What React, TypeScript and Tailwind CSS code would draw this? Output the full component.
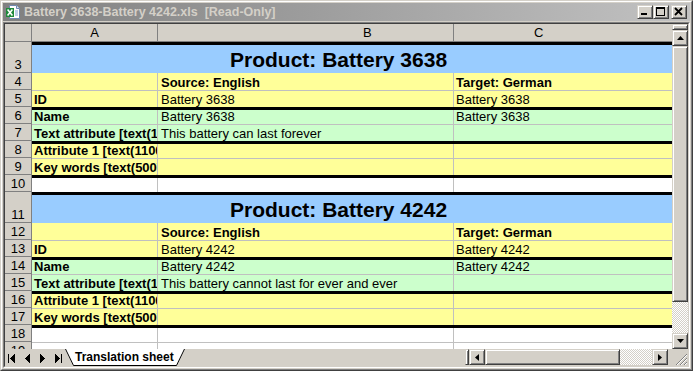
import React from "react";

type Row = {
  n: number;
  kind: "title" | "data" | "blank";
  top: string;
  bg: string;
  a?: string;
  b?: string;
  c?: string;
  head?: boolean;
};

const THICK = "border-t-[3px] border-t-black";
const GRID = "border-t border-t-[#c0c0c0]";
const YELLOW = "bg-[#ffff99]";
const GREEN = "bg-[#ccffcc]";
const BLUE = "bg-[#99ccff]";

const RAISED =
  "border border-t-[#d4d0c8] border-l-[#d4d0c8] border-r-[#404040] border-b-[#404040] bg-[#d4d0c8] shadow-[inset_1px_1px_#ffffff,inset_-1px_-1px_#808080]";
const DITHER =
  "[background-image:repeating-conic-gradient(#d4d0c8_0_25%,#ffffff_0_50%)] [background-size:2px_2px]";

function block(start: number, id: string, desc: string): Row[] {
  return [
    { n: start, kind: "title", top: THICK, bg: BLUE, a: `Product: Battery ${id}` },
    {
      n: start + 1,
      kind: "data",
      top: "",
      bg: YELLOW,
      a: "",
      b: "Source: English",
      c: "Target: German",
      head: true,
    },
    { n: start + 2, kind: "data", top: GRID, bg: YELLOW, a: "ID", b: `Battery ${id}`, c: `Battery ${id}` },
    { n: start + 3, kind: "data", top: THICK, bg: GREEN, a: "Name", b: `Battery ${id}`, c: `Battery ${id}` },
    { n: start + 4, kind: "data", top: GRID, bg: GREEN, a: "Text attribute [text(1000)]", b: desc, c: "" },
    { n: start + 5, kind: "data", top: THICK, bg: YELLOW, a: "Attribute 1 [text(1100)]", b: "", c: "" },
    { n: start + 6, kind: "data", top: GRID, bg: YELLOW, a: "Key words [text(500)]", b: "", c: "" },
    { n: start + 7, kind: "blank", top: THICK, bg: "bg-white" },
  ];
}

const rows: Row[] = [
  ...block(3, "3638", "This battery can last forever"),
  ...block(11, "4242", "This battery cannot last for ever and ever"),
  { n: 19, kind: "blank", top: GRID, bg: "bg-white" },
];

function ExcelIcon() {
  return (
    <svg width="16" height="16" viewBox="0 0 16 16">
      <path d="M4.5 1.5H11.5L14.5 4.5V14.5H4.5Z" fill="#ffffff" stroke="#7088b0" />
      <path d="M11.5 1.5V4.5H14.5" fill="#dde6f3" stroke="#7088b0" />
      <path d="M10 7H13M10 9H13M10 11H13" stroke="#7fa0d0" />
      <rect x="1" y="4" width="8" height="9" fill="#1f8a3b" />
      <path d="M2.6 5.6L7.4 11.4M7.4 5.6L2.6 11.4" stroke="#ffffff" strokeWidth="1.6" />
    </svg>
  );
}

function CaptionButton({ kind }: { kind: "min" | "max" | "close" }) {
  return (
    <div className={`flex h-[14px] w-[16px] items-center justify-center ${RAISED}`}>
      <svg width="14" height="12" viewBox="0 0 14 12" shapeRendering="crispEdges">
        {kind === "min" ? <rect x="3" y="7" width="6" height="2" fill="#000" /> : null}
        {kind === "max" ? (
          <g fill="#000">
            <rect x="2" y="1" width="9" height="2" />
            <rect x="2" y="1" width="1" height="9" />
            <rect x="10" y="1" width="1" height="9" />
            <rect x="2" y="9" width="9" height="1" />
          </g>
        ) : null}
        {kind === "close" ? (
          <path
            d="M3 2L10 9M10 2L3 9"
            stroke="#000"
            strokeWidth="1.8"
            shapeRendering="auto"
          />
        ) : null}
      </svg>
    </div>
  );
}

function Arrow({ dir }: { dir: "up" | "down" | "left" | "right" }) {
  const points = {
    up: "0,4 7,4 3.5,0",
    down: "0,0 7,0 3.5,4",
    left: "4,0 4,7 0,3.5",
    right: "0,0 0,7 4,3.5",
  }[dir];
  const vertical = dir === "up" || dir === "down";
  return (
    <svg width={vertical ? 7 : 4} height={vertical ? 4 : 7} viewBox={vertical ? "0 0 7 4" : "0 0 4 7"}>
      <polygon points={points} fill="#000" />
    </svg>
  );
}

function SheetRow({ row }: { row: Row }) {
  const height = row.kind === "title" ? "h-[31px]" : "h-[17px]";
  return (
    <div className={`flex shrink-0 ${height}`}>
      <div className="flex w-[27px] shrink-0 items-end justify-center border-r border-b border-[#808080] bg-[#d4d0c8] text-[13px] leading-[15px] text-black">
        {row.n}
      </div>
      {row.kind === "title" ? (
        <div
          className={`flex flex-1 items-end pb-px pl-[198px] text-[21px] leading-[24px] font-bold whitespace-nowrap text-black ${row.top} ${row.bg}`}
        >
          {row.a}
        </div>
      ) : (
        <div className={`flex flex-1 text-[13px] leading-[15px] text-black ${row.top} ${row.bg}`}>
          <div className="flex w-[125px] shrink-0 items-end overflow-hidden pl-[2px] font-bold whitespace-nowrap">
            {row.a}
          </div>
          <div
            className={`flex w-[296px] shrink-0 items-end overflow-hidden border-l border-[#c0c0c0] pl-[3px] whitespace-nowrap ${
              row.head ? "font-bold" : ""
            }`}
          >
            {row.b}
          </div>
          <div
            className={`flex flex-1 items-end overflow-hidden border-l border-[#c0c0c0] pl-[2px] whitespace-nowrap ${
              row.head ? "font-bold" : ""
            }`}
          >
            {row.c}
          </div>
        </div>
      )}
    </div>
  );
}

export default function App() {
  return (
    <div className="h-[371px] w-[693px] overflow-hidden border border-t-[#d4d0c8] border-r-[#404040] border-b-[#404040] border-l-[#d4d0c8] bg-[#d4d0c8] font-['Liberation_Sans',Arial,sans-serif]">
      <div className="flex h-full flex-col border border-t-white border-r-[#808080] border-b-[#808080] border-l-white p-px">
        {/* title bar */}
        <div className="flex h-[18px] shrink-0 items-center bg-linear-to-r from-[#808080] to-[#c2c2c2] pr-[3px] pl-[2px]">
          <ExcelIcon />
          <span className="ml-[3px] text-[12.5px] leading-[18px] font-bold whitespace-pre text-[#d4d0c8]">
            {"Battery 3638-Battery 4242.xls  [Read-Only]"}
          </span>
          <div className="ml-auto flex items-center">
            <CaptionButton kind="min" />
            <CaptionButton kind="max" />
            <div className="ml-[2px]">
              <CaptionButton kind="close" />
            </div>
          </div>
        </div>

        {/* sheet window */}
        <div className="mt-px flex flex-1 flex-col border border-t-[#808080] border-r-white border-b-white border-l-[#808080]">
          <div className="flex flex-1 flex-col border border-t-[#404040] border-r-[#d4d0c8] border-b-[#d4d0c8] border-l-[#404040]">
            <div className="flex h-[325px] shrink-0">
              <div className="flex w-[667px] shrink-0 flex-col overflow-hidden bg-white">
                {/* column headers */}
                <div className="flex h-[18px] shrink-0 border-b border-[#808080] bg-[#d4d0c8] text-[13px] leading-[17px] text-black">
                  <div className="w-[27px] shrink-0 border-r border-[#808080]" />
                  <div className="w-[125px] shrink-0 text-center">A</div>
                  <div className="w-[296px] shrink-0 border-l border-[#808080] pl-[205px]">B</div>
                  <div className="flex-1 border-l border-[#808080] pl-[80px]">C</div>
                </div>
                {rows.map((row) => (
                  <SheetRow key={row.n} row={row} />
                ))}
              </div>

              {/* vertical scrollbar */}
              <div className="flex w-[16px] shrink-0 flex-col">
                <div className={`h-[6px] shrink-0 ${RAISED}`} />
                <div className={`flex h-[16px] shrink-0 items-center justify-center ${RAISED}`}>
                  <Arrow dir="up" />
                </div>
                <div className={`flex-1 ${RAISED}`} />
                <div className={`h-[31px] shrink-0 ${DITHER}`} />
                <div className={`flex h-[16px] shrink-0 items-center justify-center ${RAISED}`}>
                  <Arrow dir="down" />
                </div>
              </div>
            </div>

            {/* sheet tabs and horizontal scrollbar */}
            <div className="flex h-[17px] shrink-0 items-start">
              <svg width="60" height="17" viewBox="0 0 60 17" shapeRendering="crispEdges">
                <g fill="#000">
                  <rect x="3" y="5" width="1" height="9" />
                  <polygon points="5,9.5 10,5 10,14" />
                  <polygon points="20,9.5 25,5 25,14" />
                  <polygon points="35,5 35,14 40,9.5" />
                  <polygon points="50,5 50,14 55,9.5" />
                  <rect x="56" y="5" width="1" height="9" />
                </g>
              </svg>
              <div className="relative h-[17px] w-[120px] shrink-0">
                <svg className="absolute inset-0" width="120" height="17" viewBox="0 0 120 17">
                  <polygon points="0,0 8,16 112,16 120,0" fill="#ffffff" />
                  <polyline points="0.5,0 8.5,16.5 111.5,16.5 119.5,0" fill="none" stroke="#000" />
                </svg>
                <span className="relative block pt-px pl-[10px] text-[12px] leading-[15px] font-bold text-black">
                  Translation sheet
                </span>
              </div>
              <div className="flex-1" />
              <div className={`h-[16px] w-[4px] shrink-0 ${RAISED}`} />
              <div className="flex h-[16px] w-[199px] shrink-0">
                <div className={`flex w-[16px] shrink-0 items-center justify-center ${RAISED}`}>
                  <Arrow dir="left" />
                </div>
                <div className={`w-[135px] shrink-0 ${RAISED}`} />
                <div className={`flex-1 ${DITHER}`} />
                <div className={`flex w-[16px] shrink-0 items-center justify-center ${RAISED}`}>
                  <Arrow dir="right" />
                </div>
              </div>
              <div className="flex h-[17px] w-[20px] shrink-0 items-end justify-end">
                <svg width="14" height="14" viewBox="0 0 14 14">
                  <path d="M13 2L2 13M13 6L6 13M13 10L10 13" stroke="#808080" strokeWidth="1" />
                  <path d="M13 3L3 13M13 7L7 13M13 11L11 13" stroke="#ffffff" strokeWidth="1" />
                </svg>
              </div>
            </div>
          </div>
        </div>
      </div>
    </div>
  );
}
